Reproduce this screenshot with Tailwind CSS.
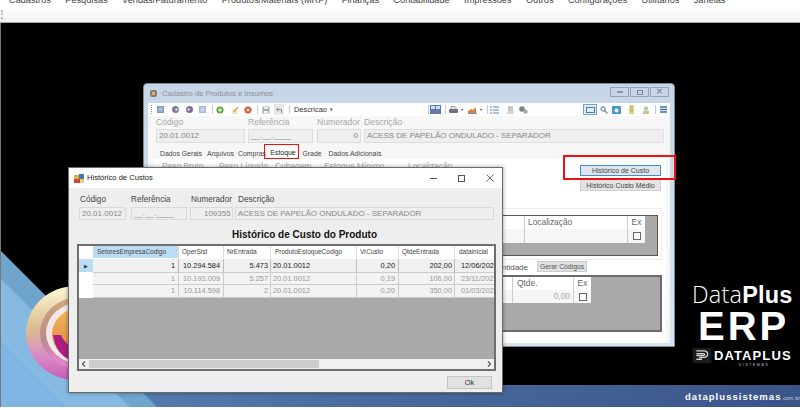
<!DOCTYPE html>
<html><head><meta charset="utf-8"><script src="https://cdn.jsdelivr.net/npm/@tailwindcss/browser@4"></script></head>
<body class="m-0 bg-white">
<div class="w-[800px] h-[410px] overflow-hidden flex flex-col bg-white font-['Liberation_Sans',sans-serif] text-[8px] text-[#333]">
  <!-- menu -->
  <div class="h-[7px] overflow-hidden bg-white shrink-0 pl-[9px]">
    <div class="flex gap-[14.4px] -mt-[5px] text-[9.2px] leading-[10px] text-[#444] whitespace-nowrap">
      <span>Cadastros</span><span>Pesquisas</span><span>Vendas/Faturamento</span><span>Produtos/Materiais (MRP)</span><span>Finanças</span><span>Contabilidade</span><span>Impressões</span><span>Outros</span><span>Configurações</span><span>Utilitários</span><span>Janelas</span>
    </div>
  </div>
  <!-- toolbar -->
  <div class="h-[16px] shrink-0 bg-gradient-to-b from-white to-[#f1f1f1] border-b border-[#a9a9a9] flex items-center pl-[1px]">
    <div class="w-[2px] h-[9px] border-l-2 border-dotted border-[#bbb]"></div>
  </div>
  <!-- desktop -->
  <div class="relative flex-1 bg-black overflow-hidden border-l border-[#777]">
    <!-- wallpaper -->
    <svg class="absolute -left-[1px] top-0" width="800" height="384" viewBox="0 23 800 384">
      <defs>
        <linearGradient id="bar" x1="0" x2="1" y1="0" y2="0"><stop offset="0" stop-color="#5b86b8"/><stop offset=".45" stop-color="#4a6c9f"/><stop offset="1" stop-color="#3a5488"/></linearGradient>
        <linearGradient id="disk" x1="0" x2="0" y1="0" y2="1"><stop offset="0" stop-color="#fbf8d6"/><stop offset=".45" stop-color="#dcbd8e"/><stop offset=".72" stop-color="#d98fc8"/><stop offset="1" stop-color="#c95fb4"/></linearGradient>
        <linearGradient id="ring" x1="0" x2="0" y1="0" y2="1"><stop offset="0" stop-color="#cfa878"/><stop offset=".6" stop-color="#b98a90"/><stop offset="1" stop-color="#ef85e0"/></linearGradient>
        <linearGradient id="core" x1="0" x2="0" y1="0" y2="1"><stop offset="0" stop-color="#efb95e"/><stop offset=".6" stop-color="#e8964a"/><stop offset="1" stop-color="#8f2a8a"/></linearGradient>
      </defs>
      <rect x="0" y="385" width="800" height="22" fill="url(#bar)"/>
      <polygon points="0,250 157,407 0,407" fill="#6fa4cc"/>
      <polygon points="0,278 130,407 0,407" fill="#86bae3"/>
      <polygon points="0,340 67,407 0,407" fill="#7fb5e2"/>
      <ellipse cx="76" cy="333" rx="50" ry="47" fill="url(#disk)"/>
      <ellipse cx="80" cy="333" rx="40" ry="36" fill="url(#ring)"/>
      <ellipse cx="82" cy="333" rx="36" ry="31" fill="#f4e6e4"/>
      <ellipse cx="83" cy="334" rx="31" ry="27" fill="url(#core)"/>
      <path d="M53 335h8l2 4 5 6v14q-12-6-15-24z" fill="#a81f80"/>
    </svg>
    <!-- footer url -->
    <div class="absolute left-[684px] top-[367px] flex items-baseline whitespace-nowrap text-white">
      <span class="text-[9.5px] font-bold tracking-[1.05px]">dataplussistemas</span><span class="text-[5px] text-[#ccd4e4] tracking-[.3px]">.com.br</span>
    </div>
    <!-- brand -->
    <div class="absolute left-[691px] top-[258px] w-[105px] flex flex-col items-start text-white">
      <div class="text-[23.5px] leading-[26px] whitespace-nowrap tracking-[.2px]"><span class="font-['Open_Sans'] font-light">Data</span><span class="font-bold">Plus</span></div>
      <div class="text-[40px] leading-[36px] font-bold tracking-[3px] ml-[6px]">ERP</div>
      <div class="flex items-center mt-[4px]">
        <svg width="20" height="15" viewBox="0 0 20 16"><rect width="20" height="16" fill="#1d1d1d"/><path d="M4 3h8q4 0 4 3.5T12 10H7M4 6h7q2 0 2 1t-2 1H4M4 12h6" fill="none" stroke="#cfd3d6" stroke-width="1.4"/></svg>
        <span class="ml-[2px] text-[13px] leading-[14px] font-bold tracking-[1.1px]">DATAPLUS</span>
      </div>
      <div class="w-full text-center text-[3.8px] leading-[5px] tracking-[1.4px] text-[#bbb] pl-[19px]">SISTEMAS</div>
    </div>

    <!-- back window -->
    <div class="absolute left-[142px] top-[60px] w-[532px] h-[264px] rounded-t-[4px] border border-[#7f8a96] bg-gradient-to-b from-[#c6d6e6] to-[#d7e5f1] flex flex-col px-[8px] pb-[3px]">
      <div class="h-[19px] shrink-0 flex items-center -mx-[4px] pl-[1px] relative">
        <svg width="9" height="9" viewBox="0 0 9 9"><rect x="1" y="1" width="7" height="7" rx="2" fill="#8f7b5f"/><rect x="3" y="3" width="3" height="3" fill="#c9b694"/></svg>
        <span class="ml-[4px] text-[7.6px] text-[#8a9097]">Cadastro de Produtos e Insumos</span>
        <div class="ml-auto flex gap-[1px] pr-[1px] mt-[-3px]">
          <div class="w-[19px] h-[10px] border border-[#94a4b6] flex items-center justify-center"><div class="w-[6px] h-[2px] bg-[#8a97a6]"></div></div>
          <div class="w-[19px] h-[10px] border border-[#94a4b6] flex items-center justify-center"><div class="w-[6px] h-[5px] border border-[#7e8a98]"></div></div>
          <div class="w-[19px] h-[10px] border border-[#94a4b6] flex items-center justify-center text-[8px] leading-none text-[#7e8a98] font-bold">✕</div>
        </div>
      </div>
      <div class="flex-1 bg-[#f7f7f7] flex flex-col min-h-0 -mx-[4px]">
        <!-- toolbar -->
        <div class="h-[13px] shrink-0 bg-white flex items-center pl-[3px]">
          <div class="w-[1px] h-[9px] border-l border-dotted border-[#999]"></div>
          <svg class="ml-[5px]" width="7" height="7" viewBox="0 0 7 7"><rect width="7" height="7" fill="#7e9cc0"/><path d="M1.500 2h4M1.500 3.500h4M1.500 5h4" stroke="#d8e4f0" stroke-width=".7"/></svg>
          <svg class="ml-[8px]" width="7" height="7" viewBox="0 0 7 7"><circle cx="3.500" cy="3.500" r="3.500" fill="#7d7a96"/><circle cx="4.500" cy="3.500" r="1.300" fill="#d5d3e4"/></svg>
          <svg class="ml-[7px]" width="7" height="7" viewBox="0 0 7 7"><circle cx="3.500" cy="3.500" r="3.500" fill="#7d6f96"/><circle cx="2.500" cy="3.500" r="1.300" fill="#d5d3e4"/></svg>
          <svg class="ml-[6px]" width="7" height="7" viewBox="0 0 7 7"><rect width="7" height="7" fill="#a5bcd6"/><path d="M1.500 2h4M1.500 3.500h4M1.500 5h4" stroke="#e8f0f8" stroke-width=".7"/></svg>
          <div class="ml-[6px] w-[1px] h-[9px] bg-[#ccc]"></div>
          <svg class="ml-[3px]" width="8" height="8" viewBox="0 0 8 8"><circle cx="4" cy="4" r="3.600" fill="#5da83c"/><path d="M2 4h4M4 2v4" stroke="#fff"/></svg>
          <svg class="ml-[7px]" width="8" height="8" viewBox="0 0 8 8"><rect x="1" y="3" width="5" height="5" fill="#ece7c7"/><path d="M3 6 7 1" stroke="#e2a23a" stroke-width="1.400"/></svg>
          <svg class="ml-[5px]" width="8" height="8" viewBox="0 0 8 8"><circle cx="4" cy="4" r="3.600" fill="#db5a32"/><path d="M2.500 2.500l3 3M5.500 2.500l-3 3" stroke="#fff"/></svg>
          <div class="ml-[5px] w-[1px] h-[9px] bg-[#ccc]"></div>
          <svg class="ml-[4px]" width="8" height="8" viewBox="0 0 8 8"><rect x=".5" y=".5" width="7" height="7" fill="#a8abb0"/><rect x="2" y="1" width="4" height="2" fill="#eee"/><rect x="2" y="5" width="4" height="2.500" fill="#eee"/></svg>
          <div class="ml-[4px] bg-[#e8e8e8] w-[10px] h-[11px] flex items-center justify-center"><svg width="8" height="8" viewBox="0 0 8 8"><path d="M6.500 7V3.500H1.500M3.500 1.500l-2 2 2 2" fill="none" stroke="#8f8f8f"/></svg></div>
          <div class="ml-[5px] w-[1px] h-[9px] bg-[#ccc]"></div>
          <span class="ml-[4px] text-[7.400px] text-[#333]">Descricao</span><span class="text-[5px] ml-[3px]">▾</span>
          <div class="ml-auto w-[242px] shrink-0 flex items-center">
            <div class="w-[1px] h-[9px] bg-[#ccc]"></div>
            <svg class="ml-[1px]" width="11" height="9" viewBox="0 0 11 9"><rect width="11" height="9" fill="#4d7fbe"/><rect x="1" y="1" width="4" height="3" fill="#cfe0f2"/><rect x="6" y="1" width="4" height="3" fill="#cfe0f2"/><path d="M2 7h7" stroke="#e05a40"/></svg>
            <div class="ml-[4px] w-[1px] h-[9px] bg-[#ccc]"></div>
            <svg class="ml-[3px]" width="9" height="8" viewBox="0 0 9 8"><rect y="3" width="9" height="4" rx="1" fill="#6c7480"/><path d="M2 3V.500h4l1 1V3" fill="#dfe3e8" stroke="#6c7480" stroke-width=".6"/></svg>
            <span class="ml-[3px] w-[4px] text-[4px] leading-none">▾</span>
            <svg class="ml-[3px]" width="9" height="8" viewBox="0 0 9 8"><path d="M0 7V5l3-2 2 1 3-3v6z" fill="#d87c45"/><path d="M0 7.500h9" stroke="#6f94bc"/></svg>
            <span class="ml-[3px] w-[4px] text-[4px] leading-none">▾</span>
            <div class="ml-[3px] w-[1px] h-[9px] bg-[#ccc]"></div>
            <svg class="ml-[2px]" width="9" height="8" viewBox="0 0 9 8"><path d="M0 1h2M3 1h6M0 4h2M3 4h6M0 7h2M3 7h6" stroke="#3f83cb" stroke-width="1.200"/></svg>
            <svg class="ml-[8px]" width="7" height="8" viewBox="0 0 7 8"><rect x="1" width="5" height="5" fill="#c6c8c6"/><rect y="5" width="7" height="3" fill="#d6d8d6"/></svg>
            <svg class="ml-[5px]" width="9" height="8" viewBox="0 0 9 8"><circle cx="3" cy="3" r="2.800" fill="#7b8087"/><circle cx="6.500" cy="5.500" r="2.200" fill="#a5a9ae"/></svg>
            <div class="ml-[55px] w-[14px] h-[11px] bg-[#d9ecfa] border border-[#6ea6d6] flex items-center justify-center"><i class="w-[9px] h-[6px] border border-[#5d7b9c] block"></i></div>
            <svg class="ml-[3px]" width="8" height="8" viewBox="0 0 8 8"><circle cx="3" cy="3" r="2" fill="none" stroke="#6a93bd" stroke-width="1.300"/><path d="M4.500 4.500 7.500 7.500" stroke="#8a8a8a" stroke-width="1.300"/></svg>
            <svg class="ml-[4px]" width="9" height="8" viewBox="0 0 9 8"><rect width="9" height="8" fill="#4c96c9"/><circle cx="4.500" cy="4.500" r="2" fill="#e6f2fa"/></svg>
            <svg class="ml-[8px]" width="5" height="9" viewBox="0 0 5 9"><rect width="5" height="9" fill="#e0d48f"/><path d="M1 2h3M1 4h3M1 6h3" stroke="#9a9160" stroke-width=".6"/></svg>
            <svg class="ml-[9px]" width="6" height="8" viewBox="0 0 6 8"><circle cx="3" cy="2.500" r="2.200" fill="#a9c9a7"/><rect y="5" width="6" height="3" fill="#c9c28e"/></svg>
            <div class="ml-[6px] w-[1px] h-[9px] bg-[#ccc]"></div>
            <svg class="ml-[4px]" width="7" height="7" viewBox="0 0 7 7"><path d="M0 1h7M0 3.500h7M0 6h7" stroke="#45709f" stroke-width="1.500"/></svg>
          </div>
        </div>
        <!-- head fields -->
        <div class="pl-[8px] pr-[6px] shrink-0 pt-[1px] text-[#a8a8a8]">
          <div class="flex text-[8.600px] leading-[11px]"><span class="w-[92px]">Código</span><span class="w-[69px]">Referência</span><span class="w-[47px]">Numerador</span><span>Descrição</span></div>
          <div class="flex gap-[3px] text-[8px] text-[#888] leading-[12px] mt-[1px]">
            <div class="w-[89px] h-[14px] border border-[#dedede] bg-[#efefef] pl-[2px]">20.01.0012</div>
            <div class="w-[65px] h-[14px] border border-[#dedede] bg-[#efefef] pl-[2px]">__.__.____</div>
            <div class="w-[44px] h-[14px] border border-[#dedede] bg-[#efefef] pr-[2px] text-right ml-[1px]">0</div>
            <div class="flex-1 h-[14px] border border-[#dedede] bg-[#efefef] pl-[2px]">ACESS DE PAPELÃO ONDULADO - SEPARADOR</div>
          </div>
        </div>
        <!-- tabs -->
        <div class="flex h-[12px] shrink-0 mt-[4px] pl-[10px] items-end text-[6.900px] leading-[11px] text-[#444] whitespace-nowrap">
          <span class="w-[46px] text-center">Dados Gerais</span><span class="w-[33px] text-center">Arquivos</span><span class="w-[30px] text-center">Compras</span><span class="w-[32px] text-center bg-white text-[#222] h-[12px]">Estoque</span><span class="w-[26px] text-center">Grade</span><span class="w-[60px] text-center">Dados Adicionais</span>
        </div>
        <!-- panel -->
        <div class="flex-1 bg-white ml-[5px] mr-[4px] pb-[11px] flex flex-col min-h-0 text-[#aaa]">
          <div class="h-[49px] shrink-0 flex justify-between">
            <div class="flex pl-[9px] pt-[3px] text-[8.400px] leading-[9px] whitespace-nowrap"><span class="w-[57px]">Peso Bruto</span><span class="w-[56px]">Peso Líquido</span><span class="w-[49px]">Cubagem</span><span class="w-[84px]">Estoque Mínimo</span><span>Localização</span></div>
            <div class="w-[81px] mr-[5px] pt-[6px] flex flex-col gap-[3px] text-[7px] leading-[9px] text-[#444] text-center">
              <div class="h-[11px] bg-[#dfe6ed] border border-[#3f8fd2]">Histórico de Custo</div>
              <div class="h-[12px] bg-[#e3e3e3] border border-[#d0d0d0] pt-[1px]">Histórico Custo Médio</div>
            </div>
          </div>
          <!-- group 1 -->
          <div class="h-[52px] shrink-0 border border-[#eee] pt-[6px] pl-[6px] pr-[3px] mr-[4px]">
            <div class="h-[41px] bg-[#a9a9a9] border border-[#555] grid grid-cols-[1fr_103px_18px_12px] grid-rows-[13px_14px_1fr] text-[8.400px] leading-[13px] text-[#666]">
              <div class="bg-white"></div><div class="bg-white border-l border-[#ccc] pl-[3px]">Localização</div><div class="bg-white border-l border-[#ccc] text-center">Ex</div><div></div>
              <div class="bg-[#f6f6f6]"></div><div class="bg-[#f6f6f6] border-l border-[#ccc]"></div><div class="bg-[#f6f6f6] border-l border-[#ccc] flex items-center justify-center"><i class="block w-[8px] h-[8px] border border-[#666] bg-white"></i></div><div></div>
            </div>
          </div>
          <div class="h-[14px] mt-[1px] shrink-0 flex justify-end items-start text-[#555] text-[8px] leading-[10px] whitespace-nowrap pr-[79px]">
            <span class="mr-[9px] pt-[2px]">Quantidade</span>
            <div class="w-[50px] h-[11px] bg-[#e1e1e1] border border-[#ccc] text-[6.800px] leading-[9px] text-center">Gerar Códigos</div>
          </div>
          <!-- grid 2 -->
          <div class="flex-1 bg-[#a9a9a9] border-2 border-[#6a6a6a] mr-[4px] grid grid-cols-[1fr_61px_18px_69px] grid-rows-[13px_13px_1fr] text-[8.400px] leading-[12px] text-[#666]">
            <div class="bg-white"></div><div class="bg-white border-l border-[#ccc] pl-[4px]">Qtde.</div><div class="bg-white border-l border-[#ccc] text-center">Ex</div><div></div>
            <div class="bg-[#f6f6f6]"></div><div class="bg-[#f6f6f6] border-l border-[#ccc] text-right pr-[3px] text-[#aaa]">0,00</div><div class="bg-[#f6f6f6] border-l border-[#ccc] flex items-center justify-center"><i class="block w-[8px] h-[8px] border border-[#666] bg-white"></i></div><div></div>
          </div>
        </div>
      </div>
    </div>
    <!-- red highlights -->
    <div class="absolute left-[263px] top-[121px] w-[35px] h-[15px] border-[1.500px] border-[#ee1111]"></div>
    <div class="absolute left-[562px] top-[132px] w-[113px] h-[25px] border-2 border-[#ee1111]"></div>

    <!-- front window -->
    <div class="absolute left-[67px] top-[144px] w-[435px] h-[226px] bg-[#eeeeee] border border-[#6b6b6b] shadow-[0_0_4px_rgba(0,0,0,.4)] flex flex-col">
      <div class="h-[20px] shrink-0 bg-white flex items-center pl-[5px]">
        <svg width="10" height="9" viewBox="0 0 10 9"><rect width="5" height="4" y="1" fill="#e4b23a"/><rect x="5" width="5" height="5" fill="#3f74bf"/><rect y="5" width="6" height="4" fill="#d2423a"/><rect x="6" y="5" width="4" height="4" fill="#f0d26a"/></svg>
        <span class="ml-[3px] text-[7.600px] text-[#222]">Histórico de Custos</span>
        <div class="ml-auto flex items-center gap-[21px] pr-[8px] text-[#555]">
          <i class="block w-[7px] h-[1px] bg-[#555]"></i>
          <i class="block w-[7px] h-[7px] border border-[#555]"></i>
          <svg width="8" height="8" viewBox="0 0 8 8"><path d="M.5.500l7 7M7.500.500l-7 7" stroke="#555" stroke-width=".9"/></svg>
        </div>
      </div>
      <div class="flex-1 flex flex-col px-[8px] min-h-0">
        <div class="flex pt-[7px] pl-[3px] text-[8.200px] leading-[10px] text-[#444]"><span class="w-[51px]">Código</span><span class="w-[60px]">Referência</span><span class="w-[47px]">Numerador</span><span>Descrição</span></div>
        <div class="flex mt-[2px] text-[8px] leading-[12px] text-[#8a8a8a] pl-[2px]">
          <div class="w-[47px] h-[13px] border border-[#d9d9d9] pl-[2px]">20.01.0012</div>
          <div class="w-[56px] h-[13px] border border-[#d9d9d9] pl-[2px] ml-[5px]">__.__.____</div>
          <div class="w-[43px] h-[13px] border border-[#d9d9d9] pr-[1px] text-right ml-[3px]">109355</div>
          <div class="w-[260px] h-[13px] border border-[#d9d9d9] pl-[2px] ml-[2px]">ACESS DE PAPELÃO ONDULADO - SEPARADOR</div>
        </div>
        <div class="text-[10px] leading-[12px] font-bold text-[#111] mt-[9px] ml-[155px] whitespace-nowrap">Histórico de Custo do Produto</div>
        <!-- grid -->
        <div class="mt-[3px] h-[127px] w-[419px] border-2 border-[#6e6e6e] bg-[#a9a9a9] flex flex-col overflow-hidden">
          <div class="grid grid-cols-[14px_85px_45px_47px_86px_42px_56px_1fr] grid-rows-[12px_14px_13px_13px] text-[6.500px] leading-[12px] text-[#444] bg-white">
            <div class="bg-white"></div><div class="bg-[#bcdcf4] pl-[4px]">SetoresEmpresaCodigo</div><div class="pl-[3px] border-l border-[#ddd]">OperSist</div><div class="pl-[3px] border-l border-[#ddd]">NrEntrada</div><div class="pl-[4px] border-l border-[#ddd]">ProdutoEstoqueCodigo</div><div class="pl-[3px] border-l border-[#ddd]">VrCusto</div><div class="pl-[3px] border-l border-[#ddd]">QtdeEntrada</div><div class="pl-[4px] border-l border-[#ddd]">datainicial</div>
            <div class="bg-[#bcdcf4] flex items-center justify-center text-[5px] text-[#333] mt-[1px]">▶</div>
            <div class="bg-[#f0f0f0] mt-[1px] text-[7.400px] leading-[13px] text-[#222] text-right pr-[3px]">1</div><div class="bg-[#f0f0f0] mt-[1px] border-l border-[#bbb] text-[7.400px] leading-[13px] text-[#222] text-right pr-[3px]">10.294.584</div><div class="bg-[#f0f0f0] mt-[1px] border-l border-[#bbb] text-[7.400px] leading-[13px] text-[#222] text-right pr-[2px]">5.473</div><div class="bg-[#f0f0f0] mt-[1px] border-l border-[#bbb] text-[7.400px] leading-[13px] text-[#222] pl-[2px]">20.01.0012</div><div class="bg-[#f0f0f0] mt-[1px] border-l border-[#bbb] text-[7.400px] leading-[13px] text-[#222] text-right pr-[3px]">0,20</div><div class="bg-[#f0f0f0] mt-[1px] border-l border-[#bbb] text-[7.400px] leading-[13px] text-[#222] text-right pr-[2px]">202,00</div><div class="bg-[#f0f0f0] mt-[1px] border-l border-[#bbb] text-[7.400px] leading-[13px] text-[#222] pl-[6px] whitespace-nowrap overflow-hidden">12/06/2024</div>
            <div class="bg-white"></div>
            <div class="bg-[#f3f3f3] border-y border-[#ccc] text-[7.400px] leading-[11px] text-[#999] text-right pr-[3px]">1</div><div class="bg-[#f3f3f3] border-y border-l border-[#ccc] text-[7.400px] leading-[11px] text-[#999] text-right pr-[3px]">10.193.009</div><div class="bg-[#f3f3f3] border-y border-l border-[#ccc] text-[7.400px] leading-[11px] text-[#999] text-right pr-[2px]">5.257</div><div class="bg-[#f3f3f3] border-y border-l border-[#ccc] text-[7.400px] leading-[11px] text-[#999] pl-[2px]">20.01.0012</div><div class="bg-[#f3f3f3] border-y border-l border-[#ccc] text-[7.400px] leading-[11px] text-[#999] text-right pr-[3px]">0,19</div><div class="bg-[#f3f3f3] border-y border-l border-[#ccc] text-[7.400px] leading-[11px] text-[#999] text-right pr-[2px]">106,00</div><div class="bg-[#f3f3f3] border-y border-l border-[#ccc] text-[7.400px] leading-[11px] text-[#999] pl-[6px] whitespace-nowrap overflow-hidden">23/11/2023</div>
            <div class="bg-white"></div>
            <div class="bg-[#f3f3f3] border-b border-[#ccc] text-[7.400px] leading-[12px] text-[#999] text-right pr-[3px]">1</div><div class="bg-[#f3f3f3] border-b border-l border-[#ccc] text-[7.400px] leading-[12px] text-[#999] text-right pr-[3px]">10.114.598</div><div class="bg-[#f3f3f3] border-b border-l border-[#ccc] text-[7.400px] leading-[12px] text-[#999] text-right pr-[2px]">2</div><div class="bg-[#f3f3f3] border-b border-l border-[#ccc] text-[7.400px] leading-[12px] text-[#999] pl-[2px]">20.01.0012</div><div class="bg-[#f3f3f3] border-b border-l border-[#ccc] text-[7.400px] leading-[12px] text-[#999] text-right pr-[3px]">0,20</div><div class="bg-[#f3f3f3] border-b border-l border-[#ccc] text-[7.400px] leading-[12px] text-[#999] text-right pr-[2px]">350,00</div><div class="bg-[#f3f3f3] border-b border-l border-[#ccc] text-[7.400px] leading-[12px] text-[#999] pl-[6px] whitespace-nowrap overflow-hidden">01/03/2023</div>
          </div>
          <div class="flex-1"></div>
          <div class="h-[10px] shrink-0 bg-[#f0f0f0] flex items-center text-[#555]">
            <svg class="mx-[2px]" width="6" height="8" viewBox="0 0 6 8"><path d="M4 1.500 1.500 4 4 6.500" fill="none" stroke="#555" stroke-width="1.200"/></svg>
            <div class="w-[230px] h-[8px] bg-[#cdcdcd]"></div>
            <svg class="ml-auto mr-[2px]" width="6" height="8" viewBox="0 0 6 8"><path d="M2 1.500 4.500 4 2 6.500" fill="none" stroke="#555" stroke-width="1.200"/></svg>
          </div>
        </div>
        <div class="flex justify-end pr-[2px] mt-[5px]">
          <div class="w-[45px] h-[13px] bg-[#e1e1e1] border border-[#c4c4c4] text-center text-[7.500px] leading-[11px] text-[#333]">Ok</div>
        </div>
      </div>
    </div>
  </div>
  <div class="h-[3px] shrink-0 bg-white"></div>
</div>
</body></html>
